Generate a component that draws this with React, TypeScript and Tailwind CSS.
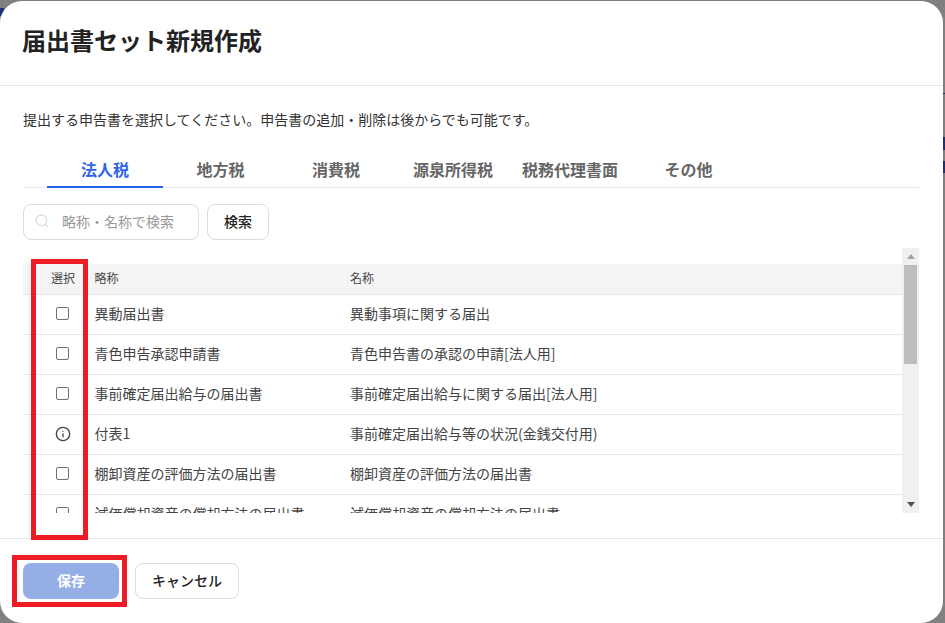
import { Search, Info } from "lucide-react";

const tabs = [
  { label: "法人税", w: "w-[116px]" },
  { label: "地方税", w: "w-[115px]" },
  { label: "消費税", w: "w-[116px]" },
  { label: "源泉所得税", w: "w-[118px]" },
  { label: "税務代理書面", w: "w-[116px]" },
  { label: "その他", w: "w-[121px]" },
];

const rows = [
  { short: "異動届出書", name: "異動事項に関する届出" },
  { short: "青色申告承認申請書", name: "青色申告書の承認の申請[法人用]" },
  { short: "事前確定届出給与の届出書", name: "事前確定届出給与に関する届出[法人用]" },
  { short: "付表1", name: "事前確定届出給与等の状況(金銭交付用)", info: true },
  { short: "棚卸資産の評価方法の届出書", name: "棚卸資産の評価方法の届出書" },
  { short: "減価償却資産の償却方法の届出書", name: "減価償却資産の償却方法の届出書" },
];

const font = "font-['Noto_Sans_CJK_JP','Liberation_Sans',sans-serif]";

export default function App() {
  return (
    <div className={`${font} relative h-[623px] w-[945px] overflow-hidden bg-[#808080] pt-px`}>
      {/* Page behind the overlay */}
      <div className="absolute left-0 top-[8px] h-[8px] w-[4px] bg-[#1c3172]" />
      <div className="absolute right-0 top-[93px] h-px w-[2px] bg-[#1c3172]" />
      <div className="absolute right-0 top-[137px] h-[13px] w-[2px] bg-[#1c3172]" />
      <div className="absolute right-0 top-[161px] h-[12px] w-[2px] bg-[#1c3172]" />

      <div className="relative flex h-[622px] w-[943px] flex-col rounded-[22px] bg-white text-[#333]">
        {/* Header */}
        <div className="flex h-[85px] shrink-0 items-center border-b border-[#e6e6e6] pb-[6px] pl-[22px]">
          <h1 className="text-[24px] font-bold leading-none text-[#222]">届出書セット新規作成</h1>
        </div>

        {/* Body */}
        <div className="flex min-h-0 flex-1 flex-col pl-[23px] pr-[24px]">
          <p className="mt-[24px] text-[14px] leading-[18px]">
            提出する申告書を選択してください。申告書の追加・削除は後からでも可能です。
          </p>

          <div className="mt-[26px] flex h-[34px] shrink-0 border-b border-[#e6e6e6] pl-6">
            {tabs.map((t, i) => (
              <div
                key={t.label}
                className={`${t.w} ${
                  i === 0
                    ? "-mb-px h-[34px] border-b-2 border-[#2563eb] text-[#2f66e8]"
                    : "h-[33px] text-[#666]"
                } flex items-start justify-center text-[16px] font-bold leading-[30px]`}
              >
                {t.label}
              </div>
            ))}
          </div>

          <div className="mt-[16px] flex shrink-0 gap-2">
            <div className="flex h-9 w-[176px] items-center rounded-lg border border-[#dcdcdc] pb-[2px] pl-[10px]">
              <Search className="h-4 w-4 text-[#dedede]" strokeWidth={2} />
              <span className="ml-3 text-[14px] text-[#999]">略称・名称で検索</span>
            </div>
            <div className="flex h-9 w-[62px] items-center justify-center rounded-lg border border-[#dcdcdc] pb-[2px] text-[14px] font-medium text-[#222]">
              検索
            </div>
          </div>

          {/* Table */}
          <div className="mt-[8px] flex h-[265px] shrink-0">
            <div className="min-w-0 flex-1 overflow-hidden">
              <div className="mt-4 h-[249px] overflow-hidden">
                <div className="flex h-[31px] items-center border-b border-[#e6e6e6] bg-[#f5f4f5] pb-[2px] text-[12px] text-[#444]">
                  <div className="w-[71.5px] pl-[28px]">選択</div>
                  <div className="w-[255.5px]">略称</div>
                  <div>名称</div>
                </div>
                {rows.map((r) => (
                  <div key={r.short} className="flex h-10 items-center border-b border-[#e6e6e6] pb-[2px] text-[14px] text-[#444]">
                    <div className="flex w-[71.5px] justify-center pl-[7.5px]">
                      {r.info ? (
                        <Info className="h-4 w-4 text-[#444]" strokeWidth={2} />
                      ) : (
                        <div className="h-[13px] w-[13px] rounded-[2px] border border-[#707070] bg-white" />
                      )}
                    </div>
                    <div className="w-[255.5px]">{r.short}</div>
                    <div>{r.name}</div>
                  </div>
                ))}
              </div>
            </div>
            {/* Scrollbar */}
            <div className="flex w-[17px] shrink-0 flex-col items-center bg-[#f0f0f0]">
              <div className="flex h-[17px] shrink-0 items-center justify-center">
                <svg width="8" height="5" viewBox="0 0 8 5"><path d="M4 0L8 5H0Z" fill="#a3a3a3" /></svg>
              </div>
              <div className="h-[99px] w-[13px] shrink-0 bg-[#bdbdbd]" />
              <div className="flex-1" />
              <div className="flex h-[17px] shrink-0 items-center justify-center">
                <svg width="8" height="5" viewBox="0 0 8 5"><path d="M0 0H8L4 5Z" fill="#505050" /></svg>
              </div>
            </div>
          </div>
        </div>

        {/* Footer */}
        <div className="flex h-[85px] shrink-0 items-start gap-4 border-t border-[#e6e6e6] pl-[23px] pt-6">
          <div className="flex h-9 w-24 items-center justify-center rounded-lg bg-[#96aee6] pb-[2px] text-[14px] font-bold text-white">
            保存
          </div>
          <div className="flex h-9 w-[104px] items-center justify-center rounded-lg border border-[#dcdcdc] bg-white pb-[2px] text-[14px] font-medium text-[#222]">
            キャンセル
          </div>
        </div>

        {/* Annotation boxes drawn over the screenshot */}
        <div className="absolute left-[31px] top-[258px] h-[281px] w-[57px] border-[5px] border-[#ed1c24]" />
        <div className="absolute left-[12px] top-[554px] h-[52px] w-[115px] border-[5px] border-[#ed1c24]" />
      </div>
    </div>
  );
}
